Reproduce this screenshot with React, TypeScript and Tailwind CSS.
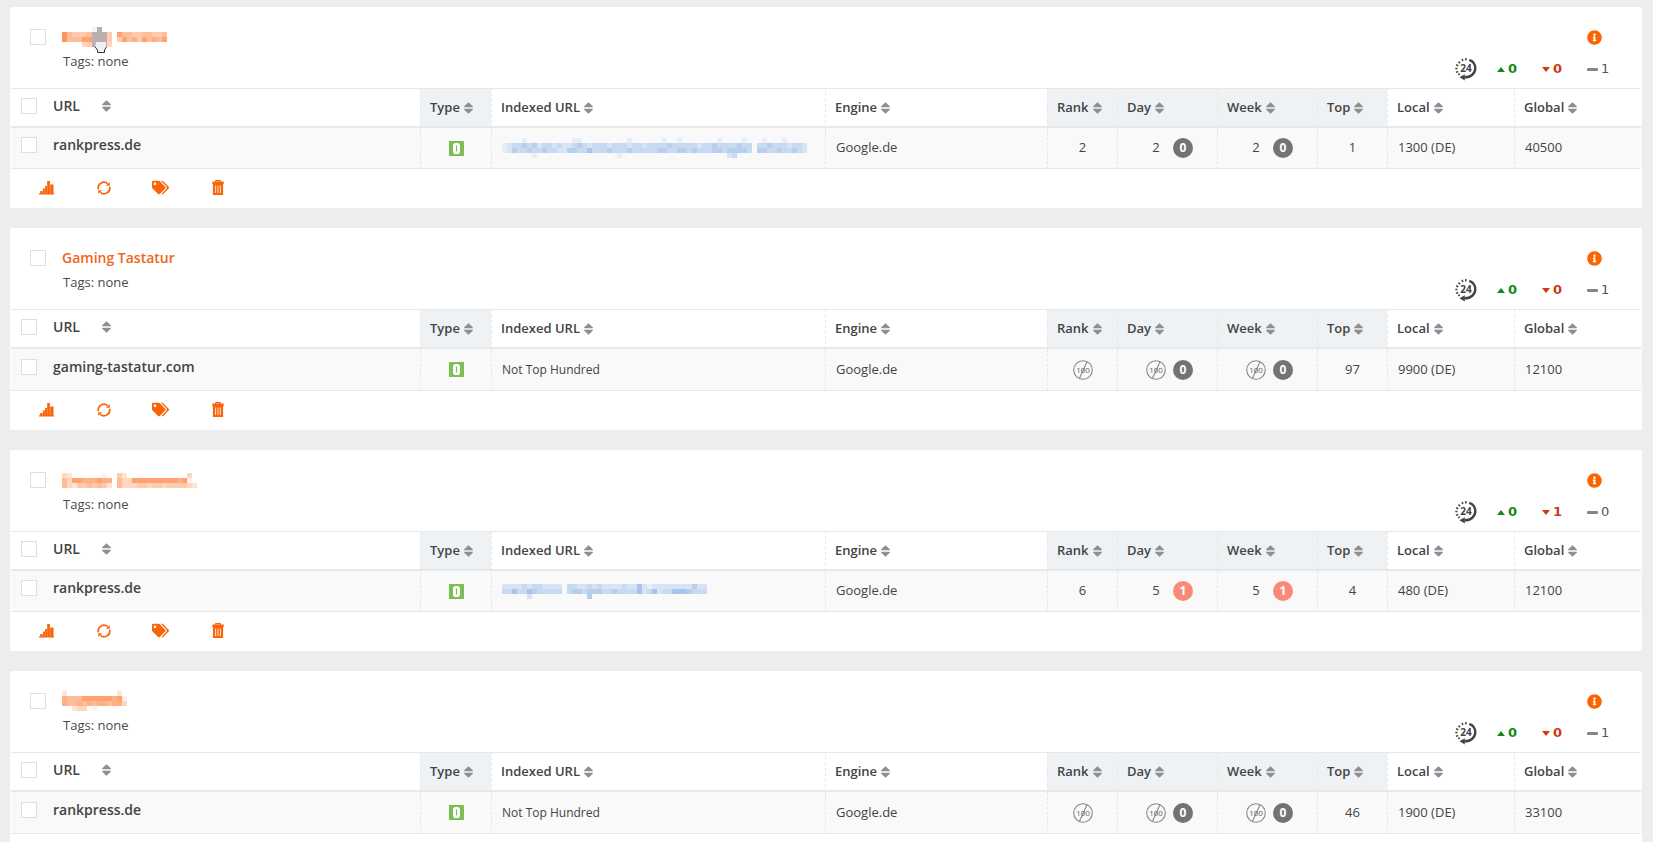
import type { ReactNode } from "react";
import clsx from "clsx";
import { FaInfoCircle, FaTags } from "react-icons/fa";

type Keyword = {
  id: string;
  title?: string;
  name: string;
  titleMask?: string[];
  hovered?: boolean;
  up: number;
  down: number;
  same: number;
  url: string;
  indexed?: string;
  indexedMask?: string[];
  rank: number | null;
  day: number | null;
  week: number | null;
  change: number;
  top: number;
  local: string;
  global: string;
};

// Masks: one character per 5px cell, digit = strength, "g" = grey, space = empty
const KEYWORDS: Keyword[] = [
  {
    id: "k1",
    name: "Hidden keyword 1",
    titleMask: [
      "      1g             ",
      "854445ggg4 7554455445",
      "855577ggg4 4756475657",
      "    34ggg3           ",
    ],
    hovered: true,
    up: 0,
    down: 0,
    same: 1,
    url: "rankpress.de",
    indexedMask: [
      "    1         11         1      1  1       1    1   1   1    ",
      "12334342332322343233323332332333343333323343333433 3343332332",
      "12433433433224433533343334333334433443433344344443 4433433432",
      "      1                1                     23              ",
    ],
    rank: 2,
    day: 2,
    week: 2,
    change: 0,
    top: 1,
    local: "1300 (DE)",
    global: "40500",
  },
  {
    id: "k2",
    name: "Gaming Tastatur",
    title: "Gaming Tastatur",
    up: 0,
    down: 0,
    same: 1,
    url: "gaming-tastatur.com",
    indexed: "Not Top Hundred",
    rank: null,
    day: null,
    week: null,
    change: 0,
    top: 97,
    local: "9900 (DE)",
    global: "12100",
  },
  {
    id: "k3",
    name: "Hidden keyword 3",
    titleMask: [
      "32      1  42            3 ",
      "5377666766 533777777777671 ",
      "5324454542 5333443443444432",
    ],
    up: 0,
    down: 1,
    same: 0,
    url: "rankpress.de",
    indexedMask: [
      "222232332222 3322323222232252122222222422",
      "335335433333 3443444334333352352335554333",
      "     2           4                       ",
    ],
    rank: 6,
    day: 5,
    week: 5,
    change: 1,
    top: 4,
    local: "480 (DE)",
    global: "12100",
  },
  {
    id: "k4",
    name: "Hidden keyword 4",
    titleMask: [
      "2          2 ",
      "6555777777671",
      "6556565665663",
      "  233 1      ",
    ],
    up: 0,
    down: 0,
    same: 1,
    url: "rankpress.de",
    indexed: "Not Top Hundred",
    rank: null,
    day: null,
    week: null,
    change: 0,
    top: 46,
    local: "1900 (DE)",
    global: "33100",
  },
];

const COLUMNS = [
  { label: "Type", width: "w-[71px]", tinted: true },
  { label: "Indexed URL", width: "w-[334px]", tinted: false },
  { label: "Engine", width: "w-[222px]", tinted: false },
  { label: "Rank", width: "w-[70px]", tinted: true },
  { label: "Day", width: "w-[100px]", tinted: true },
  { label: "Week", width: "w-[100px]", tinted: true },
  { label: "Top", width: "w-[70px]", tinted: true },
  { label: "Local", width: "w-[127px]", tinted: false },
  { label: "Global", width: "w-[127px]", tinted: false },
];

function Mosaic({ rows, color }: { rows: string[]; color: string }) {
  const cols = Math.max(...rows.map((r) => r.length));
  return (
    <svg
      width={cols * 5}
      height={rows.length * 5}
      shapeRendering="crispEdges"
      className="block"
      aria-hidden="true"
    >
      {rows.flatMap((row, y) =>
        row.split("").map((c, x) =>
          c === " " ? null : (
            <rect
              key={`${x}-${y}`}
              x={x * 5}
              y={y * 5}
              width={5}
              height={5}
              fill={c === "g" ? "#b3a5a5" : color}
              opacity={c === "g" ? 0.9 : Number(c) / 10}
            />
          )
        )
      )}
    </svg>
  );
}

function Checkbox({ label }: { label: string }) {
  return (
    <input
      type="checkbox"
      aria-label={label}
      className="block size-4 shrink-0 appearance-none border border-[#dfdfdf] bg-white checked:bg-[#f60]"
    />
  );
}

function SortIcon() {
  return (
    <svg width="9" height="12" viewBox="0 0 9 12" fill="#8f8f8f" aria-hidden="true">
      <path d="M4.500 .3 8.800 4.300V5.200H.2V4.300Z" />
      <path d="M4.500 11.700 .2 7.700V6.800H8.800V7.700Z" />
    </svg>
  );
}

function HandCursor() {
  return (
    <svg
      width="14"
      height="16"
      viewBox="0 0 14 16"
      className="pointer-events-none absolute top-[11px] left-8"
      aria-hidden="true"
    >
      <path d="M2 4H12V10L10 14.500H4L1 9.500Z" fill="#f0f0f0" />
      <path
        d="M.8 8.500 3.500 12V14.500H10.500V12L12.500 9"
        fill="none"
        stroke="#333"
        strokeWidth="1"
      />
    </svg>
  );
}

function Clock24() {
  return (
    <svg width="23" height="24" viewBox="0 0 23 24" role="img" aria-label="24 hours">
      <path
        d="M14.300 2.800C18.500 4.300 20.300 7.600 20.300 11.300C20.300 16.500 16 20.300 9.500 20.300"
        fill="none"
        stroke="#444"
        strokeWidth="2.400"
      />
      <path d="M4.500 20.300 9.800 17.300V23.500Z" fill="#444" />
      <path
        d="M10.800 1V3.600M6.900 1.900 8 4M3.400 4.600 5.100 6.200M1.100 7.700 3.300 8.700M.3 11.600H2.500M1 15.400 3.200 14.500M3.200 18 4.700 16.600"
        stroke="#444"
        strokeWidth="1.500"
      />
      <text
        x="11"
        y="15"
        textAnchor="middle"
        fontFamily="Open Sans, sans-serif"
        fontSize="10"
        fontWeight="700"
        fill="#444"
      >
        24
      </text>
    </svg>
  );
}

function NotTopHundred() {
  return (
    <svg width="20" height="20" viewBox="0 0 20 20" role="img" aria-label="Not in top 100">
      <circle cx="10" cy="10" r="9.300" fill="none" stroke="#888" strokeWidth="1.100" />
      <path d="M14 1.800 6.500 18.300" stroke="#888" strokeWidth="1.100" />
      <text
        x="10"
        y="13"
        textAnchor="middle"
        fontFamily="Open Sans, sans-serif"
        fontSize="8"
        fill="#666"
      >
        100
      </text>
    </svg>
  );
}

function TypeIcon() {
  return (
    <svg width="15" height="15" viewBox="0 0 15 15" className="mx-auto" role="img" aria-label="Organic">
      <rect width="15" height="15" fill="#7dbf55" />
      <rect x="4" y="2" width="7" height="11" rx="2.800" fill="#fff" />
      <path d="M7.500 4.500V10.500" stroke="#7dbf55" strokeWidth="1.200" />
    </svg>
  );
}

function ChartIcon() {
  return (
    <svg width="15" height="14" viewBox="0 0 15 14" fill="#f9640a" aria-hidden="true">
      <path d="M0 12.300H15V13.500H0ZM1.200 10H3.600V13H1.200ZM3.900 7.500H5.900V13H3.900ZM6.100 5H8V13H6.100ZM8.200 0H10.900V13H8.200ZM11.200 3.500H14.500V13H11.200Z" />
    </svg>
  );
}

function RefreshIcon() {
  return (
    <svg width="14" height="14" viewBox="0 0 14 14" aria-hidden="true">
      <path
        d="M1.400 8.300A5.700 5.700 0 0 1 10.600 2.600M12.600 5.700A5.700 5.700 0 0 1 3.400 11.400"
        fill="none"
        stroke="#f9640a"
        strokeWidth="1.700"
      />
      <path d="M12.800 1V4.800H9ZM1.200 13V9.200H5Z" fill="#f9640a" />
    </svg>
  );
}

function TrashIcon() {
  return (
    <svg width="12" height="15" viewBox="0 0 12 15" aria-hidden="true">
      <path d="M3.800 2V.6H8.200V2" fill="none" stroke="#f9640a" strokeWidth="1.200" />
      <path d="M.3 1.600H11.700V4H.3ZM.9 4H11.100V15H.9Z" fill="#f9640a" />
      <path d="M3.600 5.500V13M6 5.500V13M8.400 5.500V13" stroke="#fff" strokeWidth=".8" />
    </svg>
  );
}

function ToolButton({ label, children }: { label: string; children: ReactNode }) {
  return (
    <button
      type="button"
      aria-label={label}
      className="flex w-[57px] cursor-pointer items-center justify-center"
    >
      {children}
    </button>
  );
}

function Change({ value }: { value: number }) {
  return (
    <span
      className={clsx(
        "flex size-5 items-center justify-center rounded-full text-xs font-bold text-white",
        value > 0 ? "bg-[#fa8a78]" : "bg-[#737373]"
      )}
    >
      {value}
    </span>
  );
}

function Position({ value }: { value: number | null }) {
  return (
    <span className="flex w-5 justify-center">
      {value === null ? <NotTopHundred /> : value}
    </span>
  );
}

function KeywordCard({ item }: { item: Keyword }) {
  const cell = clsx(
    "border-b border-[#e8e8e8] bg-[#f9f9f9] px-2.5",
    item.rank === null ? "h-[42px]" : "h-[41px]"
  );
  const divided = clsx(cell, "border-l border-l-[#e6e6e6] [border-left-style:dashed]");

  return (
    <section className="rounded-xs bg-white">
      <header className="flex h-[81px] justify-between">
        <div className="flex gap-4 pt-[22px] pl-5">
          <Checkbox label={`Select ${item.name}`} />
          <div className="-mt-0.5">
            <h2 className="relative text-sm leading-5 font-semibold">
              <a
                href="#"
                aria-label={item.name}
                className="flex h-5 items-center text-[#f0661a]"
              >
                {item.title ?? (
                  <Mosaic rows={item.titleMask ?? []} color="#ff7a33" />
                )}
              </a>
              {item.hovered && <HandCursor />}
            </h2>
            <p className="mt-1 pl-px text-[13px] leading-5 text-[#4a4a4a]">Tags: none</p>
          </div>
        </div>
        <div className="flex flex-col pt-[23px]">
          <a href="#" aria-label="Info" className="ml-[132px] self-start">
            <FaInfoCircle size={15} color="#fb6400" />
          </a>
          <div className="mt-3 flex h-6 items-center font-['DejaVu_Sans',sans-serif] text-[13px] font-bold">
            <span className="w-[42px]">
              <Clock24 />
            </span>
            <span className="flex w-[45px] items-center gap-[3px] text-[#168a16]">
              <svg width="8" height="5" fill="currentColor" aria-hidden="true">
                <path d="M4 0 8 5H0Z" />
              </svg>
              {item.up}
            </span>
            <span className="flex w-[45px] items-center gap-[3px] text-[#cc3a12]">
              <svg width="8" height="5" fill="currentColor" aria-hidden="true">
                <path d="M0 0H8L4 5Z" />
              </svg>
              {item.down}
            </span>
            <span className="flex w-[55px] items-center gap-[3px] font-normal text-[#555]">
              <svg width="11" height="3" fill="#858585" aria-hidden="true">
                <rect width="11" height="3" rx="1" />
              </svg>
              {item.same}
            </span>
          </div>
        </div>
      </header>

      <div className="px-px">
        <table className="w-full min-w-[1400px] table-fixed border-separate border-spacing-0 text-left text-[13px] text-[#444]">
          <thead>
            <tr className="text-[#444]">
              <th className="h-10 border-t border-b-2 border-[#e8e8e8] pb-1 pl-2.5 text-sm font-semibold">
                <div className="flex items-center gap-4">
                  <Checkbox label="Select all URLs" />
                  <button type="button" className="flex cursor-pointer items-center gap-[22px]">
                    URL <SortIcon />
                  </button>
                </div>
              </th>
              {COLUMNS.map((col) => (
                <th
                  key={col.label}
                  className={clsx(
                    "h-10 border-t border-b-2 border-l border-[#e8e8e8] px-[9px] font-semibold [border-left-style:dashed]",
                    col.width,
                    col.tinted && "bg-[#eef2f5]"
                  )}
                >
                  <button type="button" className="flex cursor-pointer items-center gap-1">
                    {col.label} <SortIcon />
                  </button>
                </th>
              ))}
            </tr>
          </thead>
          <tbody>
            <tr>
              <td className={clsx(cell, "pb-1.5")}>
                <div className="flex items-center gap-4 text-sm font-semibold text-[#444]">
                  <Checkbox label={`Select ${item.url}`} />
                  {item.url}
                </div>
              </td>
              <td className={divided}>
                <TypeIcon />
              </td>
              <td className={clsx(divided, "text-xs")}>
                {item.indexed ?? (
                  <a href="#" aria-label="Indexed URL" className="block">
                    <Mosaic rows={item.indexedMask ?? []} color="#5590e0" />
                  </a>
                )}
              </td>
              <td className={divided}>Google.de</td>
              <td className={divided}>
                <div className="flex justify-center">
                  <Position value={item.rank} />
                </div>
              </td>
              {[item.day, item.week].map((value, i) => (
                <td key={i} className={divided}>
                  <div className="flex items-center justify-center gap-[7px] pl-1">
                    <Position value={value} />
                    <Change value={item.change} />
                  </div>
                </td>
              ))}
              <td className={clsx(divided, "text-center")}>{item.top}</td>
              <td className={divided}>{item.local}</td>
              <td className={divided}>{item.global}</td>
            </tr>
          </tbody>
        </table>
      </div>

      <footer className="flex h-[39px] pb-0.5 pl-2">
        <ToolButton label="Chart">
          <ChartIcon />
        </ToolButton>
        <ToolButton label="Refresh">
          <RefreshIcon />
        </ToolButton>
        <ToolButton label="Tags">
          <FaTags size={17} color="#f9640a" />
        </ToolButton>
        <ToolButton label="Delete">
          <TrashIcon />
        </ToolButton>
      </footer>
    </section>
  );
}

export default function App() {
  return (
    <main className="flex h-screen flex-col gap-5 overflow-hidden bg-[#ededed] pt-[7px] pr-[11px] pl-2.5 font-['Open_Sans',sans-serif]">
      {KEYWORDS.map((item) => (
        <KeywordCard key={item.id} item={item} />
      ))}
    </main>
  );
}
